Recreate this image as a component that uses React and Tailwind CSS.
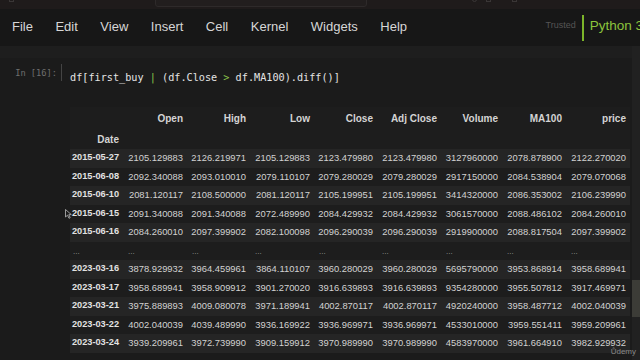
import React from "react";

const cols = ["Open", "High", "Low", "Close", "Adj Close", "Volume", "MA100", "price"];
const rows1 = [
  ["2015-05-27", "2105.129883", "2126.219971", "2105.129883", "2123.479980", "2123.479980", "3127960000", "2078.878900", "2122.270020"],
  ["2015-06-08", "2092.340088", "2093.010010", "2079.110107", "2079.280029", "2079.280029", "2917150000", "2084.538904", "2079.070068"],
  ["2015-06-10", "2081.120117", "2108.500000", "2081.120117", "2105.199951", "2105.199951", "3414320000", "2086.353002", "2106.239990"],
  ["2015-06-15", "2091.340088", "2091.340088", "2072.489990", "2084.429932", "2084.429932", "3061570000", "2088.486102", "2084.260010"],
  ["2015-06-16", "2084.260010", "2097.399902", "2082.100098", "2096.290039", "2096.290039", "2919900000", "2088.817504", "2097.399902"],
];
const rows2 = [
  ["2023-03-16", "3878.929932", "3964.459961", "3864.110107", "3960.280029", "3960.280029", "5695790000", "3953.868914", "3958.689941"],
  ["2023-03-17", "3958.689941", "3958.909912", "3901.270020", "3916.639893", "3916.639893", "9354280000", "3955.507812", "3917.469971"],
  ["2023-03-21", "3975.889893", "4009.080078", "3971.189941", "4002.870117", "4002.870117", "4920240000", "3958.487712", "4002.040039"],
  ["2023-03-22", "4002.040039", "4039.489990", "3936.169922", "3936.969971", "3936.969971", "4533010000", "3959.551411", "3959.209961"],
  ["2023-03-24", "3939.209961", "3972.739990", "3909.159912", "3970.989990", "3970.989990", "4583970000", "3961.664910", "3982.929932"],
];

const grid = "grid grid-cols-[53px_64px_63px_64px_63px_64px_61px_64px_64px]";

function DataRow({ r, striped }) {
  return (
    <div className={`${grid} h-[18.5px] items-center ${striped ? "bg-[#252525]" : "bg-[#1d1d1d]"}`}>
      {r.map((c, i) =>
        i === 0 ? (
          <div key={i} className="text-right pr-[4px] font-bold text-[9.2px] text-[#e2e2e2] whitespace-nowrap">{c}</div>
        ) : (
          <div key={i} className="text-right pr-[4px] text-[9.4px] text-[#d2d2d2] whitespace-nowrap">{c}</div>
        )
      )}
    </div>
  );
}

export default function App() {
  const menu = ["File", "Edit", "View", "Insert", "Cell", "Kernel", "Widgets", "Help"];
  return (
    <div className="w-[640px] h-[360px] overflow-hidden relative flex flex-col bg-[#1b1b1b] font-['Liberation_Sans',Arial,sans-serif]">
      {/* browser strip */}
      <div className="h-[9px] bg-[#1f1b1b] relative shrink-0">
        <div className="absolute left-[155px] top-[-4px] w-[212px] h-[11px] rounded-[3px] border border-[#2e2a2a] bg-[#221e1e]" />
        <div className="absolute left-[9px] top-[-3px] w-[5px] h-[5px] border border-[#3a3636]" />
        <div className="absolute left-[472px] top-[-3px] w-[5px] h-[5px] rounded-full border border-[#3a3636]" />
        <div className="absolute left-[486px] top-[-3px] w-[5px] h-[5px] border border-[#3a3636]" />
        <div className="absolute left-[512px] top-[-3px] w-[5px] h-[5px] border border-[#3a3636]" />
      </div>
      {/* menubar */}
      <div className="h-[37px] bg-[#171717] flex items-center shrink-0">
        <div className="flex gap-[22.5px] pl-[12px] text-[13px] text-[#d6d6d6] pb-[2px]">
          {menu.map((m) => (
            <span key={m}>{m}</span>
          ))}
        </div>
        <div className="ml-auto mr-[-3px] flex items-center">
          <span className="text-[9px] text-[#555555] mr-[6px] mb-[4px]">Trusted</span>
          <div className="w-[2px] h-[26px] bg-[#7cb52a] mr-[6px]" />
          <span className="text-[13.5px] text-[#8cc43c] whitespace-nowrap mb-[2px]">Python 3</span>
        </div>
      </div>
      <div className="flex flex-1 min-h-0">
        <div className="w-[632px] flex flex-col">
          <div className="h-[12px] bg-[#1e1e1e]" />
          {/* cell */}
          <div className="flex">
            <div className="w-[62px] h-[17px] mt-[6px] border-r border-[#444] flex justify-end pr-[4px]">
              <span className="font-['DejaVu_Sans_Mono',monospace] text-[8.7px] leading-[12px] mt-[3px] text-[#6f6f6f]">In [16]:</span>
            </div>
            <div className="ml-[8px] mt-[13px] font-['DejaVu_Sans_Mono',monospace] text-[10.2px] leading-[14px] text-[#e4e4e4] whitespace-pre">
              df[first_buy <span className="text-[#8bc34a]">|</span> (df.Close <span className="text-[#8bc34a]">&gt;</span> df.MA100).diff()]
            </div>
          </div>
          {/* table */}
          <div className="ml-[70px] mt-[22px] w-[560px] bg-[#1d1d1d]">
            <div className={`${grid} h-[22px] items-center`}>
              <div />
              {cols.map((c) => (
                <div key={c} className="text-right pr-[4px] font-bold text-[10px] text-[#d4d4d4] whitespace-nowrap">{c}</div>
              ))}
            </div>
            <div className={`${grid} h-[20px] items-center`}>
              <div className="text-right pr-[4px] font-bold text-[10px] text-[#d4d4d4]">Date</div>
            </div>
            {rows1.map((r, i) => (
              <DataRow key={r[0]} r={r} striped={i % 2 === 0} />
            ))}
            <div className={`${grid} h-[18.5px] items-center bg-[#1d1d1d]`}>
              {Array.from({ length: 9 }).map((_, i) => (
                <div key={i} className={`text-left ${i === 0 ? "pl-[3px]" : "pl-[5px]"} pt-[3px] text-[8px] leading-[10px] text-[#9a9a9a]`}>...</div>
              ))}
            </div>
            {rows2.map((r, i) => (
              <DataRow key={r[0]} r={r} striped={i % 2 === 0} />
            ))}
          </div>
        </div>
        {/* scrollbar */}
        <div className="w-[8px] bg-[#212121] flex flex-col">
          <div className="h-[234px]" />
          <div className="h-[37px] bg-[#3c3c37]" />
        </div>
      </div>
      {/* cursor */}
      <svg className="absolute left-[65px] top-[209px]" width="7" height="10" viewBox="0 0 7 10">
        <path d="M0.5 0.5 L0.5 8 L2.5 6.2 L4 9.3 L5.2 8.7 L3.8 5.7 L6.3 5.6 Z" fill="#1b1b1b" stroke="#bbbbbb" strokeWidth="0.8" />
      </svg>
      <span className="absolute right-[4px] bottom-[2px] text-[8px] text-[#8a8a8a]">Ůdemy</span>
    </div>
  );
}
